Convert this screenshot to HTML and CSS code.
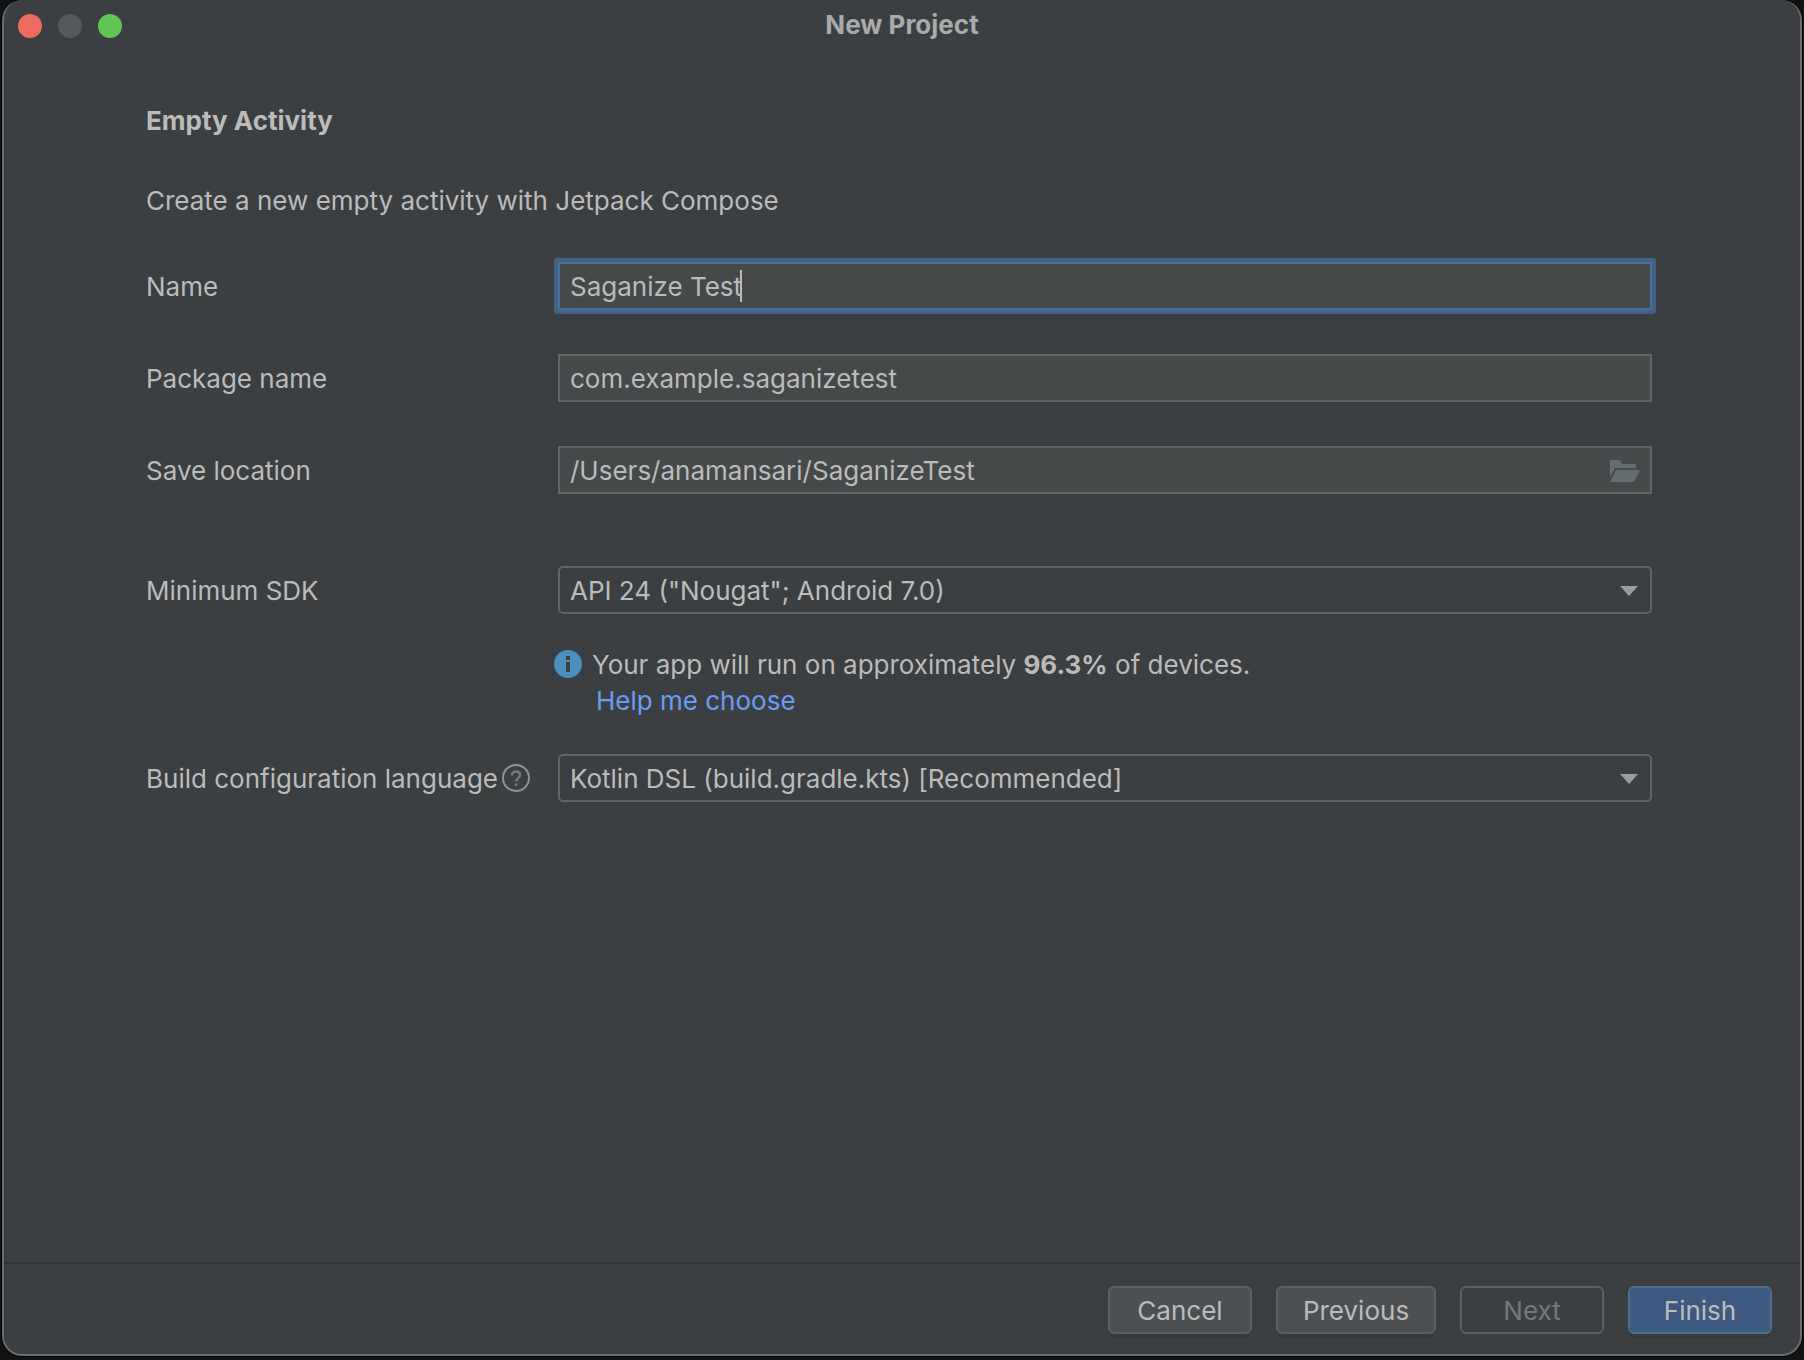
FILE: index.html
```html
<!DOCTYPE html>
<html lang="en">
<head>
<meta charset="utf-8">
<title>New Project</title>
<link rel="stylesheet" href="styles.css">
</head>
<body>
<main class="window">
  <header class="titlebar">
    <div class="lights">
      <button class="light light-close" type="button" aria-label="Close"></button>
      <button class="light light-min" type="button" aria-label="Minimize" disabled></button>
      <button class="light light-zoom" type="button" aria-label="Zoom"></button>
    </div>
    <h1 class="title">New Project</h1>
  </header>

  <form class="form" id="project">
    <h2 class="heading">Empty Activity</h2>
    <p class="intro">Create a new empty activity with Jetpack Compose</p>

    <div class="row">
      <label class="label" for="name">Name</label>
      <div class="control">
        <input class="field field-active" id="name" type="text" value="Saganize Test">
        <span class="caret"></span>
      </div>
    </div>
    <div class="row">
      <label class="label" for="package">Package name</label>
      <div class="control"><input class="field" id="package" type="text" value="com.example.saganizetest"></div>
    </div>
    <div class="row row-last">
      <label class="label" for="location">Save location</label>
      <div class="control">
        <input class="field" id="location" type="text" value="/Users/anamansari/SaganizeTest">
        <button class="browse" type="button" aria-label="Browse">
          <svg width="30" height="22" viewBox="0 0 30 22"><path d="M0 0H10L12 4H26V8H5L0 17Z M6 10H30L24 22H0Z"/></svg>
        </button>
      </div>
    </div>
    <div class="row row-sdk">
      <label class="label" for="sdk">Minimum SDK</label>
      <div class="control">
        <select class="field select" id="sdk"><option>API 24 ("Nougat"; Android 7.0)</option></select>
        <svg class="arrow" width="18" height="10" viewBox="0 0 18 10"><path d="M0 0H18L9 10Z"/></svg>
      </div>
    </div>
    <div class="info">
      <svg class="info-icon" width="28" height="28" viewBox="0 0 28 28"><circle cx="14" cy="14" r="14" fill="#4a8fbd"/><path d="M12 6h4v4h-4zM12 12h4v10h-4z" fill="#3c3f41"/></svg>
      <p class="info-text">Your app will run on approximately <b>96.3%</b> of devices.</p>
      <a class="link" href="#help">Help me choose</a>
    </div>
    <div class="row">
      <div class="label-help">
        <label class="label" for="language">Build configuration language</label>
        <svg width="28" height="28" viewBox="0 0 28 28" fill="none"><circle cx="14" cy="14" r="13" stroke="#87939a" stroke-width="2"/><path d="M10 11.500C10 9 11.600 7.500 14 7.500S18 9 18 11.200C18 14 14 14.200 14 17.500" stroke="#77797b" stroke-width="2.400"/><path d="M12.700 19.500h2.600v2.600h-2.600z" fill="#77797b"/></svg>
      </div>
      <div class="control">
        <select class="field select" id="language"><option>Kotlin DSL (build.gradle.kts) [Recommended]</option></select>
        <svg class="arrow" width="18" height="10" viewBox="0 0 18 10"><path d="M0 0H18L9 10Z"/></svg>
      </div>
    </div>
  </form>

  <footer class="footer">
    <button class="button" type="button">Cancel</button>
    <button class="button button-wide" type="button">Previous</button>
    <button class="button" type="button" disabled>Next</button>
    <button class="button button-primary" type="submit" form="project">Finish</button>
  </footer>
</main>
</body>
</html>
```
FILE: styles.css
```css
* {
  box-sizing: border-box;
}

body {
  margin: 0;
  min-height: 100vh;
  display: flex;
  padding: 0 2px 4px;
  background: #111213;
  color: #bbbbbb;
  font: 26px/36px Inter, "Liberation Sans", sans-serif;
}

h1, h2, p {
  margin: 0;
  font-size: 26px;
}

.window {
  flex: 1;
  min-width: 0;
  display: flex;
  flex-direction: column;
  background: #3c3f41;
  border: 2px solid #6a6a6a;
  border-top: 0;
  border-radius: 20px;
  box-shadow: 0 0 0 1px #000000;
}

.titlebar {
  display: grid;
  grid-template-columns: 1fr auto 1fr;
  align-items: center;
  height: 52px;
  padding: 0 14px;
}

.lights {
  display: flex;
  gap: 16px;
}

.light {
  width: 24px;
  height: 24px;
  padding: 0;
  border: 0;
  border-radius: 50%;
}

.light-close { background: #ed6a5e; }
.light-min { background: #55585a; }
.light-zoom { background: #61c554; }

.title {
  padding-bottom: 2px;
  color: #a9aaab;
  font-weight: 700;
}

.form {
  flex: 1;
  padding: 51px 148px 40px 142px;
}

.heading {
  font-weight: 700;
}

.intro {
  margin: 44px 0 43px;
}

.row {
  display: grid;
  grid-template-columns: 412px 1fr;
  align-items: center;
  margin-bottom: 44px;
}

.row-last {
  margin-bottom: 72px;
}

.row-sdk {
  margin-bottom: 32px;
}

.label {
  padding-top: 2px;
}

.label-help {
  display: flex;
  align-items: center;
  justify-content: space-between;
  padding-right: 28px;
  white-space: nowrap;
}

.control {
  position: relative;
  display: flex;
}

.field {
  width: 100%;
  height: 48px;
  padding: 0 10px;
  border: 2px solid #646464;
  border-radius: 0;
  outline: none;
  background: #45494a;
  color: inherit;
  font: inherit;
}

.field-active {
  border-color: #4b6e99;
  border-radius: 1px;
  box-shadow: 0 0 0 4px #436184;
}

.caret {
  position: absolute;
  left: 182px;
  top: 8px;
  width: 2px;
  height: 32px;
  background: #bbbbbb;
}

.browse {
  position: absolute;
  right: 12px;
  top: 14px;
  height: 22px;
  padding: 0;
  border: 0;
  background: none;
}

.browse svg {
  display: block;
  fill: #646c70;
}

.select {
  appearance: none;
  padding-top: 2px;
  border-radius: 5px;
  background: #3c3f41;
}

.arrow {
  position: absolute;
  right: 14px;
  top: 20px;
  fill: #9a9da0;
  pointer-events: none;
}

.info {
  display: grid;
  grid-template-columns: 28px 1fr;
  grid-auto-rows: 36px;
  column-gap: 10px;
  align-items: center;
  margin: 0 0 36px 408px;
}

.info-text,
.link {
  padding-top: 2px;
}

.link {
  grid-column: 2;
  justify-self: start;
  padding-left: 4px;
  color: #6a9cf5;
  text-decoration: none;
}

.footer {
  display: flex;
  justify-content: flex-end;
  gap: 24px;
  padding: 22px 28px 20px;
  border-top: 2px solid #323232;
}

.button {
  width: 144px;
  height: 48px;
  padding: 2px 0 0;
  border: 2px solid #5e6060;
  border-radius: 6px;
  background: #4c5052;
  box-shadow: 0 4px 0 #37393b;
  color: inherit;
  font: inherit;
}

.button-wide {
  width: 160px;
}

.button:disabled {
  background: none;
  box-shadow: none;
  color: #777777;
}

.button-primary {
  border-color: #4c708c;
  background: #3c5a80;
}
```
